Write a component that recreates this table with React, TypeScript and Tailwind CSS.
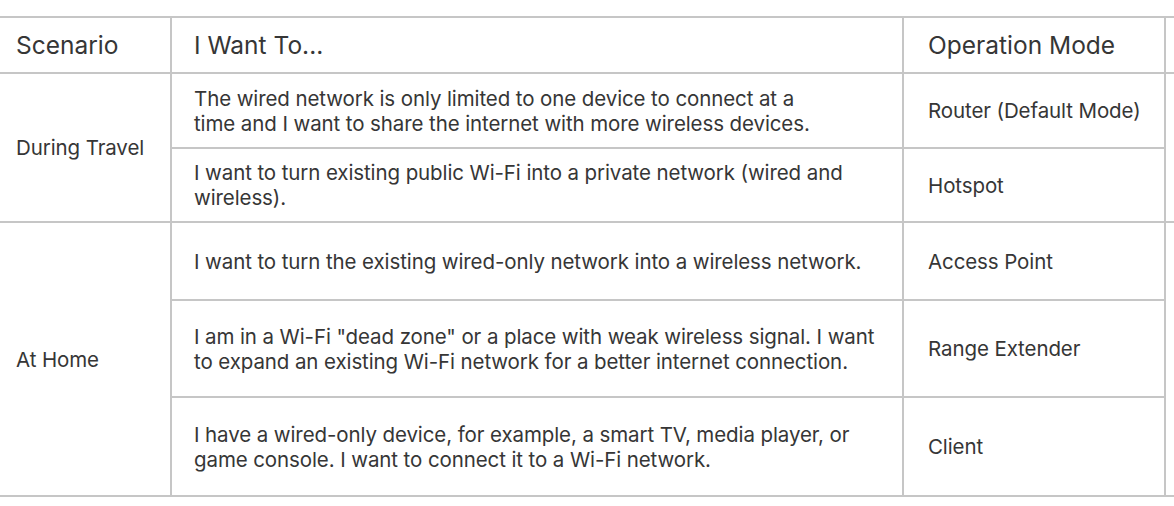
const groups = [
  {
    scenario: 'During Travel',
    rows: [
      {
        want: [
          'The wired network is only limited to one device to connect at a',
          'time and I want to share the internet with more wireless devices.',
        ],
        mode: 'Router (Default Mode)',
        h: 'h-[75px]',
      },
      {
        want: ['I want to turn existing public Wi-Fi into a private network (wired and', 'wireless).'],
        mode: 'Hotspot',
        h: 'h-[74px]',
      },
    ],
  },
  {
    scenario: 'At Home',
    rows: [
      {
        want: ['I want to turn the existing wired-only network into a wireless network.'],
        mode: 'Access Point',
        h: 'h-[78px]',
      },
      {
        want: [
          'I am in a Wi-Fi "dead zone" or a place with weak wireless signal. I want',
          'to expand an existing Wi-Fi network for a better internet connection.',
        ],
        mode: 'Range Extender',
        h: 'h-[97px]',
      },
      {
        want: [
          'I have a wired-only device, for example, a smart TV, media player, or',
          'game console. I want to connect it to a Wi-Fi network.',
        ],
        mode: 'Client',
        h: 'h-[99px]',
      },
    ],
  },
];

export default function App() {
  return (
    <div className="w-[1174px] h-[506px] overflow-hidden bg-white pt-[16px] text-[#363636] font-['Inter','Liberation_Sans',sans-serif]">
      <table className="w-[1200px] table-fixed border-collapse">
        <colgroup>
          <col className="w-[171px]" />
          <col className="w-[732px]" />
          <col className="w-[262px]" />
          <col />
        </colgroup>
        <thead>
          <tr className="h-[56px] text-[24.5px]">
            <th className="border-y-2 border-[#c6c6c6] pl-4 text-left font-normal">Scenario</th>
            <th className="border-2 border-[#c6c6c6] pl-[22px] text-left font-normal">I Want To...</th>
            <th className="border-2 border-[#c6c6c6] pl-[24px] text-left font-normal">Operation Mode</th>
            <th className="border-y-2 border-[#c6c6c6]"></th>
          </tr>
        </thead>
        <tbody className="text-[20.5px] leading-[25px] tracking-[-0.1px]">
          {groups.map((g) =>
            g.rows.map((r, i) => (
              <tr key={r.mode} className={r.h}>
                {i === 0 && (
                  <td rowSpan={g.rows.length} className="border-y-2 border-[#c6c6c6] pl-4 align-middle">
                    {g.scenario}
                  </td>
                )}
                <td className="border-2 border-[#c6c6c6] pl-[22px] align-middle whitespace-nowrap">
                  {r.want.map((line) => (
                    <div key={line}>{line}</div>
                  ))}
                </td>
                <td className="border-2 border-[#c6c6c6] pl-[24px] align-middle whitespace-nowrap">{r.mode}</td>
                {i === 0 && (
                  <td rowSpan={g.rows.length} className="border-y-2 border-[#c6c6c6]"></td>
                )}
              </tr>
            ))
          )}
        </tbody>
      </table>
    </div>
  );
}
